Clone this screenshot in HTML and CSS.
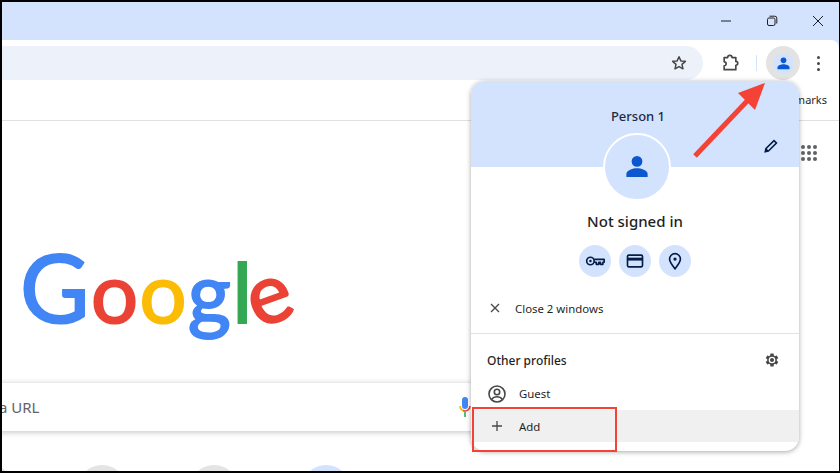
FILE: index.html
```html
<!DOCTYPE html>
<html lang="en">
<head>
    <meta charset="UTF-8">
    <meta name="viewport" content="width=device-width, initial-scale=1.0">
    <title>New Tab</title>
    <link rel="stylesheet" href="styles.css">
</head>
<body>
    <div class="window">
        <div class="titlebar">
            <svg class="win-icon" viewBox="0 0 12 12"><path d="M1 6h10" /></svg>
            <svg class="win-icon" viewBox="0 0 12 12"><rect x="1.500" y="3" width="7.500" height="7.500" rx="1.500" /><path d="M3.500 1.200h5.300a2 2 0 0 1 2 2v5.300" /></svg>
            <svg class="win-icon" viewBox="0 0 12 12"><path d="M1 1l10 10M11 1L1 11" /></svg>
        </div>

        <div class="toolbar">
            <div class="omnibox">
                <svg class="tool-icon" viewBox="0 0 24 24"><path class="line" d="M12 3.600l2.500 5.600 6 .6-4.500 4 1.300 6-5.300-3.100-5.300 3.100 1.300-6-4.500-4 6-.6z" /></svg>
            </div>
            <svg class="tool-icon puzzle" viewBox="0 0 24 24"><path class="line" d="M5 5.500h4.200a2.600 2.600 0 0 1 5.200 0H19v4.600a2.300 2.300 0 0 1 0 4.600V20H5v-4.600a2.400 2.400 0 0 0 0-4.800z" /></svg>
            <div class="tool-sep"></div>
            <div class="profile-btn">
                <div class="profile-dot">
                    <svg viewBox="0 0 24 24"><circle cx="12" cy="7.500" r="4" /><path d="M3.500 20v-2.500c0-3 5.500-4.500 8.500-4.500s8.500 1.500 8.500 4.500V20z" /></svg>
                </div>
            </div>
            <div class="kebab"><span></span><span></span><span></span></div>
        </div>

        <div class="bookmarks">All Bookmarks</div>

        <div class="ntp">
            <div class="apps">
                <span></span><span></span><span></span>
                <span></span><span></span><span></span>
                <span></span><span></span><span></span>
            </div>
            <div class="logo"><span class="blue big">G</span><span class="red">o</span><span class="yellow">o</span><span class="blue">g</span><span class="green">l</span><span class="red tilt">e</span></div>
            <div class="searchbox">
                <span class="search-text">a URL</span>
                <svg class="mic" viewBox="0 0 12 20">
                    <rect x="3" y="0" width="6" height="12" rx="3" fill="#4285f4" />
                    <path d="M1 9a5 5 0 0 0 3 4.600" fill="none" stroke="#fbbc04" stroke-width="1.600" />
                    <path d="M4 13.600a5 5 0 0 0 7-4.600" fill="none" stroke="#ea4335" stroke-width="1.600" />
                    <path d="M6 15v5" stroke="#34a853" stroke-width="1.600" />
                </svg>
            </div>
            <div class="shortcuts">
                <div class="shortcut"></div>
                <div class="shortcut"></div>
                <div class="shortcut"></div>
                <div class="shortcut accent"></div>
            </div>
        </div>

        <div class="profile-menu">
            <div class="menu-head">
                <div class="person-name">Person 1</div>
                <svg class="edit-icon" viewBox="0 0 24 24"><path d="M3 21l1.200-6L16 3.200l4.800 4.800L9 19.800zM6.500 15.800l1.700 1.700L17.800 8l-1.800-1.800z" fill-rule="evenodd" /></svg>
            </div>
            <div class="avatar">
                <svg viewBox="0 0 24 24"><circle cx="12" cy="7.500" r="4.300" /><path d="M3.500 20v-2.500c0-3 5.500-4.500 8.500-4.500s8.500 1.500 8.500 4.500V20z" /></svg>
            </div>
            <div class="signed-state">Not signed in</div>
            <div class="quick-actions">
                <div class="quick-btn">
                    <svg viewBox="0 0 24 24"><circle class="line" cx="6.500" cy="12" r="4.500" /><circle cx="6.500" cy="12" r="1.500" /><path class="line" d="M11 10h12v3.500h-1.500V16h-3v-2.500h-2V16h-3v-2.500H11" /></svg>
                </div>
                <div class="quick-btn">
                    <svg viewBox="0 0 24 24"><rect class="line" x="3" y="5" width="18" height="14" rx="1.500" /><path d="M3 8h18v3.500H3z" /></svg>
                </div>
                <div class="quick-btn">
                    <svg viewBox="0 0 24 24"><path class="line" d="M12 21.500c-3-4-6.500-8-6.500-11.800a6.500 6.500 0 0 1 13 0c0 3.800-3.500 7.800-6.500 11.800z" /><circle cx="12" cy="9.700" r="2" /></svg>
                </div>
            </div>
            <div class="menu-row close-row">
                <svg class="row-icon small" viewBox="0 0 12 12"><path d="M2 2l8 8M10 2l-8 8" /></svg>
                <span>Close 2 windows</span>
            </div>
            <div class="menu-divider"></div>
            <div class="profiles-head">
                <span>Other profiles</span>
                <svg class="gear" viewBox="0 0 24 24"><path fill-rule="evenodd" d="M19.140 12.940c.04-.3.06-.61.06-.94 0-.32-.02-.64-.07-.94l2.030-1.580a.49.49 0 0 0 .12-.61l-1.920-3.320a.488.488 0 0 0-.59-.22l-2.390.96c-.5-.38-1.030-.7-1.620-.94l-.36-2.540a.484.484 0 0 0-.48-.41h-3.840c-.24 0-.43.17-.47.41l-.36 2.540c-.59.24-1.130.57-1.620.94l-2.390-.96c-.22-.08-.47 0-.59.22L2.740 8.870c-.12.21-.08.47.12.61l2.030 1.580c-.05.3-.09.63-.09.94s.02.64.07.94l-2.030 1.580a.49.49 0 0 0-.12.61l1.920 3.320c.12.22.37.29.59.22l2.390-.96c.5.38 1.030.7 1.620.94l.36 2.540c.05.24.24.41.48.41h3.840c.24 0 .44-.17.47-.41l.36-2.540c.59-.24 1.130-.56 1.620-.94l2.390.96c.22.08.47 0 .59-.22l1.920-3.320c.12-.22.07-.47-.12-.61l-2.010-1.580zM12 17a5 5 0 1 0 0-10 5 5 0 0 0 0 10z" /><circle cx="12" cy="12" r="3" /></svg>
            </div>
            <div class="menu-row guest-row">
                <svg class="row-icon" viewBox="0 0 20 20"><circle cx="10" cy="10" r="8" /><circle cx="10" cy="8" r="2.700" /><path d="M4.500 15.500c1.500-2 3.500-2.700 5.500-2.700s4 .7 5.500 2.700" /></svg>
                <span>Guest</span>
            </div>
            <div class="menu-row add-row">
                <svg class="row-icon small" viewBox="0 0 12 12"><path d="M6 1v10M1 6h10" /></svg>
                <span>Add</span>
            </div>
        </div>

        <div class="highlight-box"></div>
        <svg class="arrow" viewBox="0 0 840 473">
            <path d="M695 156L750 98" />
            <polygon points="765,83 738,93 755,110" />
        </svg>
    </div>
</body>
</html>
```

FILE: styles.css
```css
* {
    box-sizing: border-box;
}
body {
    margin: 0;
    font-family: "Noto Sans", "Open Sans", sans-serif;
    color: #1f1f1f;
    background-color: white;
}
.line {
    fill: none;
    stroke: currentColor;
    stroke-width: 2;
    stroke-linejoin: round;
}
.window {
    position: relative;
    display: flex;
    flex-direction: column;
    width: 840px;
    height: 473px;
    border: 2px solid #000;
    border-right-width: 1px;
    background-color: #d3e3fd;
    overflow: hidden;
}

/* window title bar */
.titlebar {
    display: flex;
    justify-content: flex-end;
    align-items: center;
    gap: 34px;
    height: 38px;
    padding-right: 15px;
    flex-shrink: 0;
}
.win-icon {
    width: 12px;
    height: 12px;
    fill: none;
    stroke: #1f1f1f;
    stroke-width: 1;
}

/* toolbar */
.toolbar {
    display: flex;
    align-items: center;
    height: 40px;
    padding-top: 6px;
    background-color: white;
    border-top-right-radius: 8px;
    flex-shrink: 0;
}
.omnibox {
    display: flex;
    justify-content: flex-end;
    align-items: center;
    width: 701px;
    height: 34px;
    padding-right: 15px;
    background-color: #edf2fa;
    border-radius: 0 17px 17px 0;
}
.tool-icon {
    width: 18px;
    height: 18px;
    color: #474747;
}
.puzzle {
    width: 20px;
    height: 20px;
    margin-left: 17px;
}
.tool-sep {
    width: 1px;
    height: 16px;
    margin-left: 16px;
    background-color: #d3e3fd;
}
.profile-btn {
    display: flex;
    justify-content: center;
    align-items: center;
    width: 34px;
    height: 34px;
    margin-left: 9px;
    background-color: #e3e3e3;
    border-radius: 50%;
}
.profile-dot {
    display: flex;
    justify-content: center;
    align-items: center;
    width: 21px;
    height: 21px;
    background-color: #d3e3fd;
    border-radius: 50%;
}
.profile-dot svg {
    width: 17px;
    height: 17px;
    fill: #0b57d0;
}
.kebab {
    display: flex;
    flex-direction: column;
    gap: 3px;
    margin-left: 17px;
}
.kebab span {
    width: 3px;
    height: 3px;
    background-color: #474747;
    border-radius: 50%;
}

/* bookmarks bar */
.bookmarks {
    height: 41px;
    padding: 12px 12px 0 0;
    font-size: 11px;
    line-height: 16px;
    text-align: right;
    color: #1f1f1f;
    background-color: white;
    border-bottom: 1px solid #e0e0e0;
    flex-shrink: 0;
}

/* new tab page */
.ntp {
    position: relative;
    flex: 1;
    min-height: 0;
    background-color: white;
    overflow: hidden;
}
.apps {
    position: absolute;
    top: 24px;
    left: 799px;
    display: grid;
    grid-template-columns: repeat(3, 4px);
    gap: 2px;
}
.apps span {
    width: 4px;
    height: 4px;
    background-color: #5f6368;
    border-radius: 50%;
}
.logo {
    height: 144px;
    margin: 105px 0 0 18px;
    font-family: Lato, sans-serif;
    font-size: 83px;
    line-height: 120px;
    letter-spacing: 1.5px;
    white-space: nowrap;
    -webkit-text-stroke: 2px;
}
.big {
    font-size: 95px;
}
.blue { color: #4285f4; }
.red { color: #ea4335; }
.yellow { color: #fbbc05; }
.green {
    margin-right: -9px;
    color: #34a853;
}
.tilt {
    display: inline-block;
    transform: rotate(-20deg);
}
.searchbox {
    display: flex;
    justify-content: space-between;
    align-items: center;
    width: 508px;
    height: 48px;
    margin-top: 13px;
    margin-left: -10px;
    padding: 0 29px 0 7px;
    background-color: white;
    box-shadow: 0 1px 6px rgba(32, 33, 36, 0.28);
}
.search-text {
    font-size: 15px;
    color: #5f6368;
}
.mic {
    width: 12px;
    height: 20px;
}
.shortcuts {
    display: flex;
    gap: 64px;
    margin: 34px 0 0 -36px;
}
.shortcut {
    flex-shrink: 0;
    width: 48px;
    height: 48px;
    background-color: #e3e5e3;
    border-radius: 50%;
}
.shortcut.accent {
    background-color: #d3e3fd;
}

/* profile menu */
.profile-menu {
    position: absolute;
    top: 79px;
    left: 469px;
    display: flex;
    flex-direction: column;
    width: 328px;
    height: 370px;
    background-color: white;
    border-radius: 14px;
    box-shadow: 0 1px 5px rgba(0, 0, 0, 0.35);
    overflow: hidden;
}
.menu-head {
    display: flex;
    flex-direction: column;
    height: 86px;
    padding: 26px 19px 0 4px;
    background-color: #d3e3fd;
    flex-shrink: 0;
}
.person-name {
    padding-left: 21px;
    font-size: 13px;
    font-weight: 500;
    line-height: 18px;
    text-align: center;
    color: #1f2a44;
}
.edit-icon {
    align-self: flex-end;
    width: 18px;
    height: 18px;
    margin-top: 12px;
    fill: #041e49;
}
.avatar {
    display: flex;
    justify-content: center;
    align-items: center;
    align-self: center;
    width: 68px;
    height: 68px;
    margin: -34px 0 0 4px;
    background-color: #d3e3fd;
    border: 2px solid white;
    border-radius: 50%;
    flex-shrink: 0;
}
.avatar svg {
    width: 30px;
    height: 30px;
    fill: #0b57d0;
}
.signed-state {
    margin-top: 9px;
    font-size: 15px;
    font-weight: 500;
    line-height: 22px;
    text-align: center;
}
.quick-actions {
    display: flex;
    justify-content: center;
    gap: 8px;
    margin-top: 13px;
}
.quick-btn {
    display: flex;
    justify-content: center;
    align-items: center;
    width: 32px;
    height: 32px;
    color: #041e49;
    background-color: #d3e3fd;
    border-radius: 50%;
}
.quick-btn svg {
    width: 20px;
    height: 20px;
    fill: #041e49;
}
.menu-row {
    display: flex;
    align-items: center;
    height: 32px;
    font-size: 11.4px;
    padding-left: 16px;
    color: #1f1f1f;
}
.close-row {
    margin-top: 15px;
    padding-left: 18px;
    gap: 14px;
}
.guest-row {
    height: 33px;
    margin-top: 7px;
    gap: 12px;
}
.add-row {
    padding-left: 20px;
    gap: 16px;
    background-color: #f0f0f0;
}
.row-icon {
    width: 20px;
    height: 20px;
    fill: none;
    stroke: #474747;
    stroke-width: 1.600;
}
.row-icon.small {
    width: 12px;
    height: 12px;
    stroke-width: 1.300;
}
.menu-divider {
    height: 1px;
    margin-top: 9px;
    background-color: #d3e3fd;
}
.profiles-head {
    display: flex;
    justify-content: space-between;
    align-items: center;
    height: 20px;
    margin-top: 16px;
    padding: 0 19px 0 16px;
    font-size: 12px;
    font-weight: 500;
}
.gear {
    width: 16px;
    height: 16px;
    fill: #474747;
}

/* annotations drawn over the screenshot */
.highlight-box {
    position: absolute;
    top: 405px;
    left: 470px;
    width: 145px;
    height: 45px;
    border: 2px solid #f44336;
}
.arrow {
    position: absolute;
    top: -2px;
    left: -2px;
    width: 840px;
    height: 473px;
    pointer-events: none;
}
.arrow path {
    fill: none;
    stroke: #f44336;
    stroke-width: 5;
}
.arrow polygon {
    fill: #f44336;
}
```
